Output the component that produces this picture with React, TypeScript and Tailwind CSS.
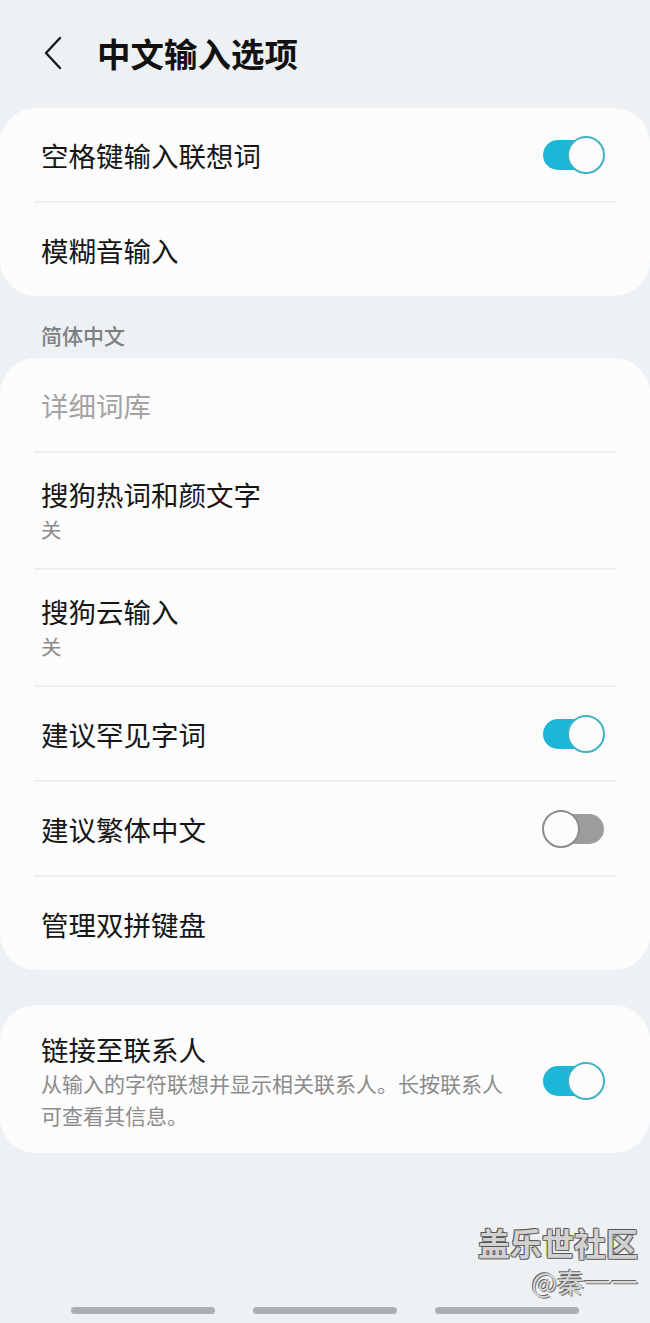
import type { ReactNode } from 'react';

const FONT = '"Noto Sans CJK SC", "Noto Sans", sans-serif';

function Toggle({ on }: { on: boolean }) {
  return (
    <div className="relative h-[38px] w-[63px] shrink-0">
      <div
        className={`absolute top-[4px] h-[30px] w-[56px] rounded-full ${
          on ? 'left-[1px] bg-[#1cb6d6]' : 'left-[6px] bg-[#9c9c9c]'
        }`}
      />
      <div
        className={`absolute top-0 h-[38px] w-[38px] rounded-full border-[2.5px] bg-[#fcfcfc] ${
          on ? 'right-0 border-[#3fb3c6]' : 'left-0 border-[#8c8c8c]'
        }`}
      />
    </div>
  );
}

function Divider() {
  return <div className="mx-[34px] h-[2px] bg-[#eeeff0]" />;
}

function Row({
  title,
  sub,
  toggle,
  disabled,
  tall,
}: {
  title: string;
  sub?: string;
  toggle?: boolean;
  disabled?: boolean;
  tall?: boolean;
}) {
  return (
    <div
      className={`flex items-center justify-between pl-[41px] pr-[45px] ${
        tall ? 'h-[115px]' : 'h-[93px]'
      }`}
    >
      <div className="flex flex-col">
        <span
          className={`text-[27.5px] leading-[36px] ${disabled ? 'text-[#a3a3a3]' : 'text-[#161616]'}`}
        >
          {title}
        </span>
        {sub && <span className="text-[20.5px] leading-[34px] text-[#8b8b8b]">{sub}</span>}
      </div>
      {toggle !== undefined && <Toggle on={toggle} />}
    </div>
  );
}

function Card({ children }: { children: ReactNode }) {
  return <div className="rounded-[36px] bg-[#fcfcfc]">{children}</div>;
}

export default function App() {
  return (
    <div
      className="flex min-h-[1323px] w-[650px] flex-col bg-[#eef1f3]"
      style={{ fontFamily: FONT }}
    >
      <div className="flex h-[108px] items-center pb-[2px]">
        <svg width="20" height="34" viewBox="0 0 20 34" className="ml-[43px]">
          <path d="M17 2 L3 17 L17 32" fill="none" stroke="#1a1a1a" strokeWidth="2.4" strokeLinecap="round" strokeLinejoin="round" />
        </svg>
        <h1 className="ml-[34px] text-[33.5px] font-bold leading-[40px] text-[#111]">中文输入选项</h1>
      </div>

      <Card>
        <Row title="空格键输入联想词" toggle={true} />
        <Divider />
        <Row title="模糊音输入" />
      </Card>

      <div className="h-[62px] pl-[41px] pt-[25px] text-[21px] font-medium leading-[28px] text-[#7d7f81]">
        简体中文
      </div>

      <Card>
        <Row title="详细词库" disabled />
        <Divider />
        <Row title="搜狗热词和颜文字" sub="关" tall />
        <Divider />
        <Row title="搜狗云输入" sub="关" tall />
        <Divider />
        <Row title="建议罕见字词" toggle={true} />
        <Divider />
        <Row title="建议繁体中文" toggle={false} />
        <Divider />
        <Row title="管理双拼键盘" />
      </Card>

      <div className="mt-[35px]">
        <Card>
          <div className="flex items-center justify-between pb-[22px] pl-[41px] pr-[45px] pt-[26px]">
            <div className="flex w-[472px] flex-col">
              <span className="text-[27.5px] leading-[36px] text-[#161616]">链接至联系人</span>
              <span className="text-[21px] leading-[32px] text-[#8b8b8b]">
                从输入的字符联想并显示相关联系人。长按联系人可查看其信息。
              </span>
            </div>
            <Toggle on={true} />
          </div>
        </Card>
      </div>

      <div className="mt-[72px] flex flex-col items-end pr-[12px]">
        <span className="text-[32px] font-bold leading-[34px] text-[#d2d2d2] [text-shadow:-1px_-1px_0_#555,1px_1px_0_#666,1px_-1px_0_#777,-1px_1px_0_#777]">
          盖乐世社区
        </span>
        <span className="mt-[8px] text-[27px] leading-[30px] text-[#d8d8d8] [text-shadow:-1px_-1px_0_#666,1px_1px_0_#777]">
          @秦一一
        </span>
      </div>

      <div className="mt-[10px] flex justify-center gap-[38px]">
        <div className="h-[7px] w-[144px] rounded-full bg-[#adb0b2]" />
        <div className="h-[7px] w-[144px] rounded-full bg-[#adb0b2]" />
        <div className="h-[7px] w-[144px] rounded-full bg-[#adb0b2]" />
      </div>
    </div>
  );
}
